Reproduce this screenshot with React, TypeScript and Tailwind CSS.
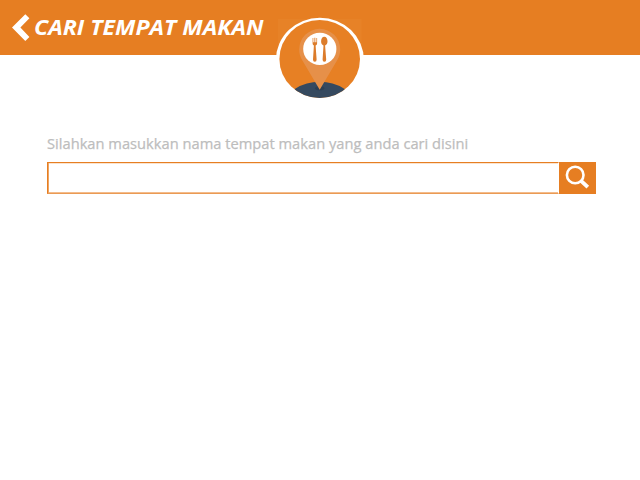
import React from "react";

function BackIcon() {
  return (
    <svg className="block h-[28px] w-[18px] shrink-0" viewBox="0 0 18 28">
      <path d="M13.3 0.2 L17.4 4.2 L8.4 13.4 L17.4 22.9 L13.3 27 L0 13.5 Z" fill="#fff" />
    </svg>
  );
}

function Logo() {
  return (
    <svg className="absolute left-[270px] top-[10px] h-[92px] w-[100px]" viewBox="270 10 100 92">
      <defs>
        <clipPath id="disc">
          <ellipse cx="319.7" cy="59" rx="40.3" ry="39" />
        </clipPath>
      </defs>
      <rect x="278" y="19" width="83.5" height="36" fill="#e78227" />
      <ellipse cx="319.9" cy="60" rx="44" ry="42.3" fill="#fff" />
      <g clipPath="url(#disc)">
        <rect x="270" y="10" width="100" height="92" fill="#e78024" />
        <ellipse cx="319.7" cy="104" rx="33.5" ry="22.3" fill="#35495f" />
        <ellipse cx="319.7" cy="88.2" rx="4.6" ry="2" fill="#2d3f52" />
      </g>
      <path
        d="M319.7 89.8 L302.4 60.5 C300.3 57 299.2 53.4 299.2 49.4 A20.5 20.6 0 0 1 340.2 49.4 C340.2 53.4 339.1 57 337 60.5 Z"
        fill="#e69049"
      />
      <ellipse cx="319.8" cy="48.9" rx="16.6" ry="16.2" fill="#fff" />
      <g fill="#dc7c2b">
        <path d="M312.6 38 h.7 v4.2 h1.1 v-4.4 h.9 v4.4 h1.1 v-4.2 h.7 v5.4 q0 1.3-1.5 2.2 l1 13.8 q.1 2.4-1.8 2.4 q-1.9 0-1.8-2.4 l.9-13.8 q-1.3-.9-1.3-2.2 Z" />
        <path d="M324.3 36.8 c1.9 0 3.2 2 3.2 4.5 c0 2-.8 3.7-2.4 4.2 l1.1 13.9 q.1 2.4-1.8 2.4 q-1.9 0-1.8-2.4 l.9-13.9 c-1.6-.5-2.4-2.2-2.4-4.2 c0-2.5 1.3-4.5 3.2-4.5 Z" />
      </g>
    </svg>
  );
}

function SearchIcon() {
  return (
    <svg className="block h-[32px] w-[37px]" viewBox="559 162 37 32">
      <circle cx="575.2" cy="175" r="8.3" fill="none" stroke="#fff" strokeWidth="2.6" />
      <path d="M580.8 180.6 L587.8 187.2" stroke="#fff" strokeWidth="3.9" />
    </svg>
  );
}

export default function App() {
  return (
    <div className="h-[480px] w-[640px] overflow-hidden bg-white font-['Open_Sans','Noto_Sans',sans-serif]">
      <header className="relative flex h-[55px] items-center bg-[#e67e22] pl-[12px]">
        <BackIcon />
        <h1 className="-mt-[3px] ml-[3.5px] origin-left scale-x-[1.052] whitespace-nowrap text-[22px] font-bold italic leading-[28px] text-white">
          CARI TEMPAT MAKAN
        </h1>
        <Logo />
      </header>
      <main className="pl-[47px] pt-[78px]">
        <label
          htmlFor="place"
          className="-ml-[0.5px] block h-[29px] origin-left scale-x-[0.979] whitespace-nowrap text-[15px] leading-[21px] text-[#bdbdbd] [-webkit-text-stroke:0.25px_#bdbdbd]"
        >
          Silahkan masukkan nama tempat makan yang anda cari disini
        </label>
        <form className="flex h-[32px] w-[549px]">
          <input
            id="place"
            className="h-[32px] w-[512px] border border-b-[#ea9a54] border-l-[#e67e22] border-r-white border-t-[#e67e22] bg-white px-2 shadow-[inset_1px_0_0_#efa563,inset_0_1px_0_#fbe3cd,inset_0_-1px_0_#f3bc8c] outline-none"
          />
          <button type="button" aria-label="Cari" className="h-[32px] w-[37px] bg-[#e67e22]">
            <SearchIcon />
          </button>
        </form>
      </main>
    </div>
  );
}
